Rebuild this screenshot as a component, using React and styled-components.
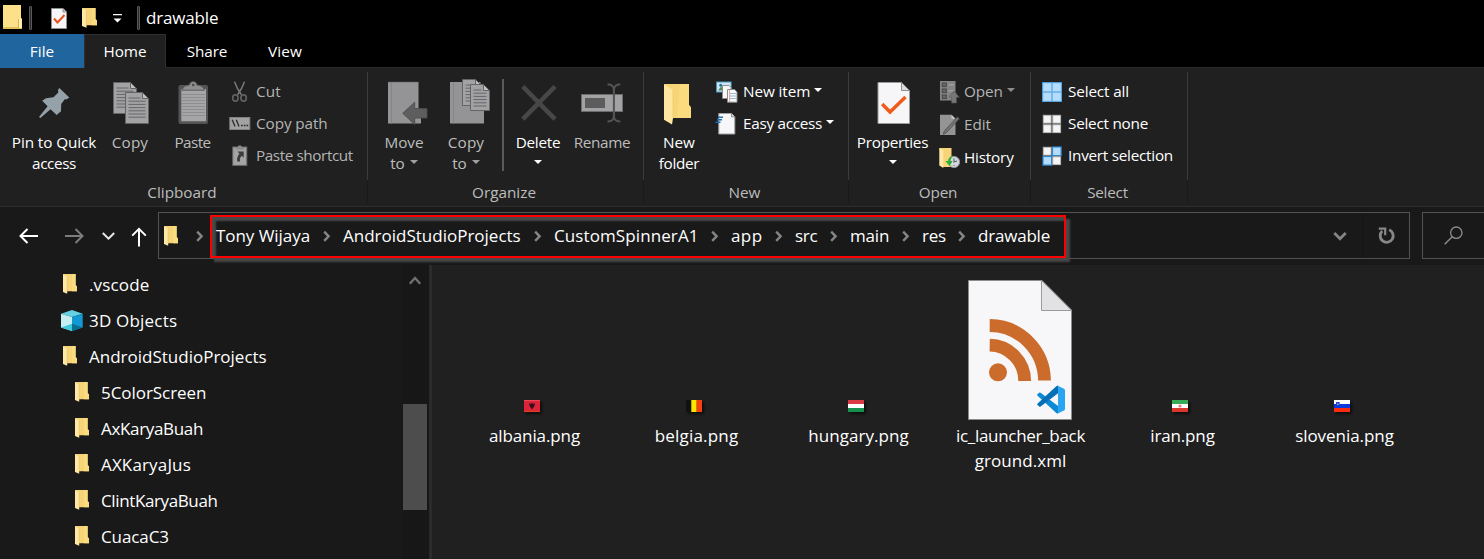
import React from "react";
import styled, { createGlobalStyle, css } from "styled-components";

const GlobalStyle = createGlobalStyle`
  * { box-sizing: border-box; }
  body { margin: 0; background: #191919; }
  svg { display: block; flex: none; overflow: visible; }
`;

const Window = styled.div`
  display: flex;
  flex-direction: column;
  width: 1484px;
  height: 559px;
  overflow: hidden;
  background: #191919;
  color: #fff;
  font-family: "Open Sans", "Noto Sans", sans-serif;
  font-size: 17px;
  white-space: nowrap;
`;

const Text = styled.span`
  letter-spacing: ${(p) => p.$ls || 0}px;
`;

/* ---------- title bar and tabs ---------- */

const TitleBar = styled.header`
  display: flex;
  align-items: center;
  height: 34px;
  padding-left: 3px;
  background: #000;
`;

const TitleDivider = styled.i`
  width: 3px;
  height: 24px;
  margin: 1px ${(p) => p.$right}px 0 ${(p) => p.$left}px;
  border: 1px solid #5a5a5a;
  border-radius: 1px;
  background: #2a2a2a;
`;

const QuickAccess = styled.div`
  display: flex;
  align-items: center;
  gap: 15.5px;
  padding-top: 2px;
`;

const Tabs = styled.nav`
  display: flex;
  height: 34px;
  background: #000;
  border-bottom: 1px solid #2b2b2b;
`;

const Tab = styled.div`
  display: flex;
  justify-content: center;
  height: 34px;
  width: ${(p) => p.$w}px;
  font-size: 15.3px;
  line-height: 34px;
  ${(p) => p.$kind === "file" && css`background: #20659e;`}
  ${(p) =>
    p.$kind === "active" &&
    css`
      background: #202020;
      border: 1px solid #303030;
      border-bottom: 0;
      line-height: 32px;
    `}
`;

/* ---------- ribbon ---------- */

const Ribbon = styled.section`
  display: flex;
  height: 139px;
  background: #202020;
  border-bottom: 1px solid #2e2e2e;
  font-size: 15.3px;
`;

const GroupBox = styled.div`
  display: flex;
  flex-direction: column;
  width: ${(p) => p.$w}px;
  padding-top: 4px;
`;

const GroupTools = styled.div`
  display: flex;
  height: 108px;
  padding-left: ${(p) => p.$pad}px;
  border-right: 1px solid #3c3c3c;
`;

const GroupLabel = styled.div`
  height: 23px;
  padding-right: 3px;
  border-right: 1px solid #191919;
  color: #bdbdbd;
  line-height: 25px;
  text-align: center;
`;

const BigTool = styled.div`
  display: flex;
  flex-direction: column;
  align-items: center;
  width: ${(p) => p.$w}px;
  padding-top: 8px;
  color: ${(p) => (p.$dim ? "#bdbdbd" : "#fff")};
  line-height: 21px;
  svg.big { margin-bottom: 4px; }
`;

const Caption = styled.div`
  display: flex;
  justify-content: center;
  align-items: center;
  gap: 5px;
  height: 21px;
  .caret { margin-bottom: 3px; }
`;

const SmallTools = styled.div`
  display: flex;
  flex-direction: column;
  margin: ${(p) => p.$top}px 0 0 ${(p) => p.$left}px;
`;

const SmallTool = styled.div`
  display: flex;
  align-items: center;
  gap: 5px;
  height: ${(p) => p.$h || 32}px;
  color: ${(p) => (p.$dim ? "#b4b4b4" : "#fff")};
  ${Text} { margin-bottom: 2px; }
  .caret { margin: 0 0 4px -1px; }
`;

const ToolDivider = styled.i`
  width: 2px;
  height: 92px;
  margin: 7px 0 0 10px;
  background: #5a5a5a;
`;

/* ---------- address bar ---------- */

const AddressRow = styled.div`
  display: flex;
  height: 58px;
  padding: 5px 0 0 19px;
  background: #191919;
`;

const NavButtons = styled.div`
  display: flex;
  align-items: center;
  width: 139px;
  height: 47px;
`;

const NavSlot = styled.span`
  margin-right: ${(p) => p.$gap}px;
`;

const AddressBox = styled.div`
  position: relative;
  display: flex;
  align-items: center;
  width: 1252px;
  height: 47px;
  padding-left: 5px;
  border: 1px solid #535353;
`;

const RootChevron = styled.span`
  display: flex;
  justify-content: center;
  width: 38px;
  padding-left: 5px;
`;

const Crumb = styled.span`
  display: flex;
  align-items: center;
  justify-content: space-between;
  width: ${(p) => p.$w}px;
  padding-right: ${(p) => (p.$last ? 0 : 12.5)}px;
`;

const PathOutline = styled.div`
  position: absolute;
  top: 2px;
  left: 51px;
  width: 856px;
  height: 43px;
  border: 2px solid #fe0000;
  box-shadow: inset 4px 4px 2px #484848, 4px 4px 2px #484848;
  z-index: 0;
`;

const Crumbs = styled.div`
  position: relative;
  z-index: 1;
  display: flex;
  flex: 1;
`;

const Refresh = styled.div`
  display: flex;
  align-items: center;
  justify-content: center;
  width: 47px;
  height: 45px;
  margin-left: 15px;
  border-left: 1px solid #151515;
`;

const SearchBox = styled.div`
  display: flex;
  align-items: center;
  flex: 1;
  height: 47px;
  margin-left: 12px;
  padding-left: 21px;
  border: 1px solid #535353;
  border-right: 0;
`;

/* ---------- body ---------- */

const Body = styled.main`
  display: flex;
  flex: 1;
  min-height: 0;
`;

const Tree = styled.aside`
  width: 403px;
  padding-top: 1px;
  overflow: hidden;
`;

const TreeRow = styled.div`
  display: flex;
  align-items: center;
  height: 36px;
  padding-left: ${(p) => (p.$child ? 73 : 61)}px;
`;

const TreeIcon = styled.span`
  width: 28px;
`;

const TreeFolder = styled.span`
  display: block;
  padding-left: 2px;
`;

const Scrollbar = styled.div`
  display: flex;
  flex-direction: column;
  align-items: center;
  width: 26px;
  padding: 11px 2px 0 0;
  background: #171717;
`;

const Thumb = styled.div`
  width: 24px;
  height: 106px;
  margin-top: 119px;
  background: #4d4d4d;
`;

const Files = styled.section`
  display: flex;
  flex: 1;
  padding: 15px 0 0 21px;
  border-left: 3px solid #2b2b2b;
  background: #202020;
`;

const Tile = styled.div`
  flex: none;
  width: 162px;
  display: flex;
  flex-direction: column;
  align-items: center;
  text-align: center;
`;

const Preview = styled.div`
  display: flex;
  flex-direction: column;
  justify-content: flex-end;
  align-items: center;
  height: 140px;
  padding: 0 ${(p) => (p.$flag ? 4 : 0)}px ${(p) => (p.$flag ? 8 : 0)}px 0;
  margin-bottom: 3px;
  svg { ${(p) => p.$flag && css`filter: drop-shadow(2px 2px 1.5px #0009);`} }
`;

const FileName = styled.div`
  padding-left: 1px;
  line-height: 25px;
`;

/* ---------- icons ---------- */

const Caret = ({ c = "#fff" }) => (
  <svg className="caret" width="8" height="4" viewBox="0 0 8 4"><path d="M0 0h8L4 4z" fill={c} /></svg>
);

const FolderIcon = ({ w = 14, h = 20 }) => (
  <svg width={w} height={h} viewBox="0 0 14 20" preserveAspectRatio="none">
    <path d="M0.3 0H12.6V11L14 12.5V17.2H4L1 16z" fill="#f6d477" />
    <path d="M9 0H12.6V11L14 12.5V17.2H9z" fill="#f9dc80" />
    <path d="M0 0L4.2 2.8V19.7L0 18z" fill="#ffe8a4" />
    <path d="M4.2 2.8V17.2" stroke="#e5c064" strokeWidth="0.6" />
  </svg>
);

const WindowFolder = () => (
  <svg width="19" height="24" viewBox="0 0 19 24">
    <path d="M0 0H18V13L19 14V24H0z" fill="#fce08a" />
    <path d="M0 23H19M15.7 23V14" stroke="#d9b449" strokeWidth="1.4" fill="none" />
    <path d="M16 13.5h2.6V23H16z" fill="#fff0b8" />
  </svg>
);

const CheckPage = () => (
  <svg className="big" width="48" height="48" viewBox="0 0 48 48">
    <path d="M9 2.5H32.5L40.5 10.5V43.5H9z" fill="#f6f6f8" stroke="#9a9a9a" />
    <path d="M32.5 2.5V10.5H40.5z" fill="#dcdcdc" stroke="#8c8c8c" />
    <path d="M13.2 24L21 32L36.5 17" fill="none" stroke="#f15a18" strokeWidth="3.4" />
  </svg>
);

const QuickCheck = () => (
  <svg width="16" height="21" viewBox="0 0 16 21">
    <path d="M.5 .5H12L15.5 4V20.5H.5z" fill="#f6f6f8" stroke="#8e8e8e" />
    <path d="M12 .5V4H15.5" fill="#ccc" stroke="#8e8e8e" />
    <path d="M3 10.5L6.5 14.5L13.5 7" fill="none" stroke="#e8511a" strokeWidth="2" />
  </svg>
);

const Customize = () => (
  <svg width="9" height="9" viewBox="0 0 9 9"><path d="M0 0H9V1.2H0zM.5 4.5H8.5L4.5 8.5z" fill="#fff" /></svg>
);

const Pin = () => (
  <svg className="big" width="48" height="48" viewBox="0 0 48 48">
    <path d="M29.3 8L39.3 17.5L36.4 19.5L35 19L31.2 24L31 31.3L26.7 35L20.5 29.2L10.4 38L9 37L17.6 26.3L12.2 20.8L16 18.2L23.5 17.3L28.3 12.5L28 10z" fill="#95a1a9" />
  </svg>
);

const PageShape = ({ x, y, w, h }) => (
  <g transform={`translate(${x} ${y})`}>
    <path d={`M0 0H${w - 6}L${w} 6V${h}H0z`} fill="#a2a2a4" stroke="#646464" />
    <path d={`M${w - 6} 0V6H${w}z`} fill="#c0c0c0" stroke="#646464" />
    {Array.from({ length: Math.floor((h - 6) / 3.2) }, (_, i) => (
      <path key={i} d={`M3 ${5.5 + i * 3.2}H${i === 0 ? w - 8 : w - 3}`} stroke="#66666a" />
    ))}
  </g>
);

const CopyIcon = () => (
  <svg className="big" width="48" height="48" viewBox="0 0 48 48">
    <PageShape x={7.5} y={2.5} w={23} h={31} />
    <PageShape x={19.5} y={12.5} w={23} h={31} />
  </svg>
);

const PasteIcon = () => (
  <svg className="big" width="48" height="48" viewBox="0 0 48 48">
    <rect x="9.5" y="5" width="29.5" height="39" rx="2" fill="#545454" />
    <path d="M12.3 9H37V41.3H12.3z" fill="#a5a5a7" />
    {[14.5, 17.5, 20.5, 23.5, 26.5, 29.5, 32.5, 35.5].map((y) => (
      <path key={y} d={`M13 ${y}H36`} stroke="#8b8b8e" strokeWidth=".9" />
    ))}
    <path d="M13 10.2C14 6.5 17 5.5 20.6 5C20.8 2.6 22.2 1.7 24.2 1.7C26.2 1.7 27.6 2.6 27.8 5C31.5 5.5 34.5 6.5 35.5 10.2z" fill="#8e8e90" stroke="#5c5c5c" />
    <circle cx="24.2" cy="5" r="1.3" fill="#4a4a4a" />
  </svg>
);

const MoveIcon = () => (
  <svg className="big" width="48" height="48" viewBox="0 0 48 48">
    <path d="M8 2H38.5V28L41 31V43.5H8z" fill="#949496" />
    <path d="M11.5 2V43.5" stroke="#858587" />
    <path d="M8.3 2.3H38.2" stroke="#7c7c7c" strokeWidth=".8" />
    <path d="M22.8 33.3L34.7 22.2V28.6H47V38H34.7V44.6z" fill="#5e5e5e" stroke="#4c4c4c" strokeWidth=".9" />
  </svg>
);

const CopyToIcon = () => (
  <svg className="big" width="48" height="48" viewBox="0 0 48 48">
    <path d="M8 2H38.5V28L42 31V43.5H8z" fill="#949496" />
    <path d="M11.5 2V43.5" stroke="#858587" />
    <PageShape x={20.5} y={-0.5} w={19} h={26} />
    <PageShape x={28.5} y={4.5} w={19} h={26} />
  </svg>
);

const DeleteIcon = () => (
  <svg className="big" width="48" height="48" viewBox="0 0 48 48">
    <path d="M8.8 6.5L41 39.2M41 6.5L8.8 39.2" stroke="#474747" strokeWidth="4.6" />
  </svg>
);

const RenameIcon = () => (
  <svg className="big" width="48" height="48" viewBox="0 0 48 48">
    <rect x="3.5" y="14.5" width="41" height="17" fill="#a2a2a4" stroke="#6c6c6c" />
    <rect x="7" y="18" width="20" height="10" fill="#5c5c5c" />
    <path d="M29.5 4.5C33.5 4.3 35.8 6.2 35.8 9.5V36.5C35.8 39.8 33.5 41.7 29.5 41.5M42.3 4.5C38.3 4.3 36 6.2 36 9.5V36.5C36 39.8 38.3 41.7 42.3 41.5" fill="none" stroke="#555" strokeWidth="1.9" />
  </svg>
);

const NewFolderIcon = () => (
  <svg className="big" width="48" height="48" viewBox="0 0 48 48">
    <path d="M9.2 4H34V25L36 27.4V38H15z" fill="#f7d474" />
    <path d="M25 4H34V25L36 27.4V38H22z" fill="#fadb7e" />
    <path d="M9 4L18 10.3V38L17 44.5L9 39.7z" fill="#ffe6a0" />
    <path d="M18 10.3V38" stroke="#eccb72" strokeWidth=".8" />
  </svg>
);

const Cut = () => (
  <svg width="22" height="22" viewBox="0 0 22 22">
    <path d="M5.5 .8C7 5 9.3 9.5 12.4 13.8M15.5 .8C14 5 11.7 9.5 8.6 13.8" stroke="#7a7a7a" strokeWidth="1.5" fill="none" />
    <ellipse cx="6.4" cy="17" rx="2.7" ry="3.2" fill="none" stroke="#606060" strokeWidth="1.7" />
    <ellipse cx="14.6" cy="17" rx="2.7" ry="3.2" fill="none" stroke="#606060" strokeWidth="1.7" />
  </svg>
);

const CopyPath = () => (
  <svg width="22" height="22" viewBox="0 0 22 22">
    <rect x=".8" y="4.5" width="20" height="12" fill="#a2a2a2" stroke="#828282" />
    <path d="M3.2 6.7L6 13.5M7.3 6.7L10 13.5" stroke="#2e2e2e" strokeWidth="1.4" />
    <path d="M12 12.5h1.7M14.8 12.5h1.7M17.5 12.5h1.7" stroke="#2e2e2e" strokeWidth="1.7" />
  </svg>
);

const PasteShortcut = () => (
  <svg width="22" height="22" viewBox="0 0 22 22">
    <rect x="3.8" y="2" width="14" height="18.4" fill="#a4a4a4" stroke="#6a6a6a" />
    <path d="M6.5 4.5V2H8.8L9.6 .6H12L12.8 2H15.2V4.5z" fill="#8a8a8a" />
    <path d="M8.5 6.5H14.7V12.7L12.8 10.8C11 12.5 10.8 14 11 16.5H8.2C7.8 13 8.6 10.8 10.5 8.7z" fill="#3c3c3c" />
  </svg>
);

const NewItem = () => (
  <svg width="22" height="22" viewBox="0 0 22 22">
    <rect x=".6" y="1" width="14.5" height="10" fill="#cfe8f7" stroke="#4a9ac4" />
    <path d="M2 9.5L5 5.5L8 9.5z" fill="#5a8a50" /><circle cx="4.7" cy="4.3" r="1.5" fill="#1f6f9a" />
    <path d="M6.5 4.5H13L15 6.5V17.5H6.5z" fill="#f8f8f8" stroke="#8c8c8c" />
    <path d="M11.5 8.5H18.5L21 11V21.2H11.5z" fill="#fafafa" stroke="#8c8c8c" />
    <path d="M13.5 12.5H20M13.5 15H20M13.5 17.5H20" stroke="#86a8c8" strokeWidth=".8" />
    <path d="M13.6 9V21" stroke="#e09090" strokeWidth=".8" />
  </svg>
);

const EasyAccess = () => (
  <svg width="22" height="22" viewBox="0 0 22 22">
    <path d="M2.8 .5H15.5L18.8 3.8V21H2.8z" fill="#f7f7f9" stroke="#a0a0a0" />
    <path d="M15.5 .5V3.8H18.8" fill="#ddd" stroke="#8c8c8c" />
    <path d="M2 4.3H7M1 6.8H6M-.5 9.3H4.5" stroke="#1c6cb0" strokeWidth="1.4" />
  </svg>
);

const OpenIcon = () => (
  <svg width="22" height="22" viewBox="0 0 22 22">
    <rect x="3" y="0" width="15.5" height="19.5" fill="#858585" />
    {[2, 8, 14].map((y) => (
      <g key={y}>
        <rect x="5.3" y={y} width="4" height="3.6" fill="#666" stroke="#484848" />
        <path d={`M11.5 ${y + 1.8}H17`} stroke="#a0a0a0" strokeWidth="1.4" />
      </g>
    ))}
    <path d="M17 10L22.3 16.2H19.4V22H14.6V16.2H11.7z" fill="#777" stroke="#565656" strokeWidth=".6" />
  </svg>
);

const EditIcon = () => (
  <svg width="22" height="22" viewBox="0 0 22 22">
    <path d="M3 .7H14.5L18.5 4.7V21H3z" fill="#949494" />
    <path d="M14.5 .7V4.7H18.5z" fill="#c4c4c4" />
    <path d="M20.3 3L22.3 4.8L9.5 18.5L6.3 20.3L7.4 16.8z" fill="#747474" stroke="#4f4f4f" strokeWidth=".8" />
  </svg>
);

const HistoryIcon = () => (
  <svg width="22" height="22" viewBox="0 0 22 22">
    <path d="M2.3 1H14.5V20H6z" fill="#f6d477" />
    <path d="M2.3 1L6.3 3.5V21L2.3 18.5z" fill="#ffe8a4" />
    <circle cx="17" cy="15" r="5.6" fill="#d4d8da" stroke="#8e9498" />
    <path d="M17 11.5V15L20 14M14 15H15M17 18V19" stroke="#5c6468" strokeWidth="1.1" fill="none" />
    <path d="M16.5 8.5C12.8 9.2 11.2 11.5 11.2 14H8.3L12.6 19L15.5 14H13.5C13.6 12 14.5 10.5 16.5 8.5z" fill="#2fae3c" />
  </svg>
);

const Squares = ({ kinds, joined }) => (
  <svg width="22" height="22" viewBox="0 0 22 22">
    {joined && <rect x="1" y="1" width="20" height="20" fill="#3c92d6" />}
    {kinds.split("").map((k, i) => {
      const x = i % 2 ? 11.5 : 2;
      const y = i > 1 ? 11.5 : 2;
      return k === "b" ? (
        <rect key={i} x={x} y={y} width="8.6" height="8.6" fill="#b5dcfb" stroke={joined ? "#74b8ec" : "#2f88d0"} strokeWidth={joined ? 0.6 : 1.2} />
      ) : (
        <rect key={i} x={x + 0.3} y={y + 0.3} width="7.8" height="7.8" fill="#f5f5f5" stroke="#b8b8b8" />
      );
    })}
  </svg>
);

const ArrowLeft = () => (
  <svg width="20" height="16" viewBox="0 0 20 16"><path d="M19 8H1.5M8.5 1L1.5 8L8.5 15" fill="none" stroke="#fff" strokeWidth="2" /></svg>
);
const ArrowRight = () => (
  <svg width="20" height="16" viewBox="0 0 20 16"><path d="M0 8H17.5M10.5 1L17.5 8L10.5 15" fill="none" stroke="#7d7d7d" strokeWidth="2" /></svg>
);
const ArrowUp = () => (
  <svg width="15" height="20" viewBox="0 0 15 20"><path d="M7 20.5V3M.2 9.6L7 2.8L13.8 9.6" fill="none" stroke="#fff" strokeWidth="2" /></svg>
);
const ChevDown = ({ c, w = 2, s = 13 }) => (
  <svg width={s} height="8" viewBox="0 0 13 8"><path d="M.8 1L6.5 6.7L12.2 1" fill="none" stroke={c} strokeWidth={w} /></svg>
);
const ChevUp = () => (
  <svg width="12" height="9" viewBox="0 0 12 9"><path d="M.8 7.8L6 2L11.2 7.8" fill="none" stroke="#707070" strokeWidth="2.4" /></svg>
);
const ChevRight = () => (
  <svg width="8" height="12" viewBox="0 0 8 12"><path d="M1.2 1.7L5.6 6.3L1.2 10.9" fill="none" stroke="#858585" strokeWidth="2.4" /></svg>
);
const RefreshIcon = () => (
  <svg width="17" height="17" viewBox="0 0 17 17">
    <path d="M11.2 2.8A6.5 6.5 0 1 1 4.2 4.1" fill="none" stroke="#888" strokeWidth="2.8" />
    <path d="M.8 1.7H7.2V8.2" fill="none" stroke="#888" strokeWidth="2.2" />
  </svg>
);
const SearchIcon = () => (
  <svg width="19" height="19" viewBox="0 0 19 19">
    <circle cx="12.3" cy="6.7" r="5.7" fill="none" stroke="#8c8c8c" strokeWidth="1.3" />
    <path d="M8.2 10.8L.7 18.3" stroke="#8c8c8c" strokeWidth="1.4" />
  </svg>
);

const Cube = () => (
  <svg width="22" height="21" viewBox="0 0 22 21">
    <path d="M11 0L21.7 3.8L11 7L0 3.8z" fill="#65d2e4" />
    <path d="M0 3.8L11 7V21L0 17.5z" fill="#c4f0f2" />
    <path d="M21.7 3.8L11 7V21L21.7 17.5z" fill="#1298d4" />
    <path d="M0 17.5L11 13.8V21z" fill="#3ecbdc" />
    <path d="M21.7 17.5L11 13.8V21z" fill="#0b6f92" />
  </svg>
);

const XmlFile = () => (
  <svg width="104" height="140" viewBox="0 0 104 140">
    <path d="M.5 .5H74L103.5 30V139.5H.5z" fill="#f7f7f9" stroke="#8c8c8c" />
    <path d="M73.5 .5L103.5 30.5H73.5z" fill="#e2e2e4" stroke="#9a9a9a" />
    <circle cx="30" cy="92.3" r="9" fill="#cb6c2c" />
    <path d="M21.7 65.2A35.5 35.8 0 0 1 56.7 101" fill="none" stroke="#cb6c2c" strokeWidth="12.8" />
    <path d="M21.7 45.5A55 55.5 0 0 1 76.5 100.5" fill="none" stroke="#cb6c2c" strokeWidth="12.8" />
    <g transform="translate(69.2 105.7) scale(.278)">
      <path d="M1.4 36.4A4.2 4.2 0 0 1 1.4 30.3L6.9 25.2A4.2 4.2 0 0 1 12.2 25L75 72.7V99.5Q71 100 68.7 97.9z" fill="#0c8ad6" />
      <path d="M1.4 63.6A4.2 4.2 0 0 0 1.4 69.7L6.9 74.8A4.2 4.2 0 0 0 12.2 75L75 27.3V.5Q71 0 68.7 2.1z" fill="#0670b6" />
      <path d="M75.9 99.1Q71 100.6 68.7 97.9C71 100 75 98.5 75 95.2V4.8C75 1.5 71 0 68.7 2.1Q71 -.6 75.9 .9L96.5 10.8Q100 12.5 100 16.4V83.6Q100 87.5 96.5 89.2z" fill="#27a5f0" />
    </g>
  </svg>
);

const flagArt = {
  albania: (
    <>
      <rect width="16" height="12" fill="#dc2338" /><rect width="16" height="1" fill="#e8485a" /><rect y="11" width="16" height="1" fill="#e04020" />
      <path d="M5 3L7 4L8 2.5L9 4L11 3L10.3 6.3L8 9.5L5.7 6.3z" fill="#35101c" />
    </>
  ),
  belgia: (
    <><rect width="5.3" height="12" fill="#111" /><rect x="5.3" width="5.4" height="12" fill="#ffe600" /><rect x="10.7" width="5.3" height="12" fill="#fb4010" /></>
  ),
  hungary: (
    <><rect width="16" height="4" fill="#d93a45" /><rect y="4" width="16" height="4" fill="#fff" /><rect y="8" width="16" height="4" fill="#14904f" /></>
  ),
  iran: (
    <><rect width="16" height="4" fill="#37ab57" /><rect y="4" width="16" height="4" fill="#fff" /><rect y="8" width="16" height="4" fill="#d8382c" /><circle cx="8" cy="6" r="1.6" fill="#e58080" /></>
  ),
  slovenia: (
    <><rect width="16" height="4" fill="#fff" /><rect y="4" width="16" height="4" fill="#0c38e0" /><rect y="8" width="16" height="4" fill="#fb2a10" /><path d="M2 2H5.7V5Q4 7 2 5z" fill="#2448c8" /><path d="M3 4.5L3.9 3.3L4.8 4.5z" fill="#fff" /></>
  ),
};

const Flag = ({ name }) => <svg width="16" height="12" viewBox="0 0 16 12">{flagArt[name]}</svg>;

/* ---------- composition ---------- */

const Group = ({ label, ls, w, pad, children }) => (
  <GroupBox $w={w}>
    <GroupTools $pad={pad}>{children}</GroupTools>
    <GroupLabel><Text $ls={ls}>{label}</Text></GroupLabel>
  </GroupBox>
);

const crumbs = [
  ["Tony Wijaya", 127, -0.05],
  ["AndroidStudioProjects", 211, 0],
  ["CustomSpinnerA1", 177, 0.1],
  ["app", 64, 0.4],
  ["src", 55, -0.3],
  ["main", 72, -0.2],
  ["res", 56, -0.3],
  ["drawable", 80, -0.2],
];

const tree = [
  [".vscode", 0, 0.15, "folder"],
  ["3D Objects", 0, 0.2, "cube"],
  ["AndroidStudioProjects", 0, 0, "folder"],
  ["5ColorScreen", 1, -0.05, "folder"],
  ["AxKaryaBuah", 1, -0.33, "folder"],
  ["AXKaryaJus", 1, 0.15, "folder"],
  ["ClintKaryaBuah", 1, -0.38, "folder"],
  ["CuacaC3", 1, -0.1, "folder"],
];

const files = [
  [["albania.png"], -0.1, "albania"],
  [["belgia.png"], 0.2, "belgia"],
  [["hungary.png"], 0.05, "hungary"],
  [["ic_launcher_back", "ground.xml"], -0.3, null],
  [["iran.png"], -0.15, "iran"],
  [["slovenia.png"], -0.05, "slovenia"],
];

export default function App() {
  return (
    <Window>
      <GlobalStyle />
      <TitleBar>
        <WindowFolder />
        <TitleDivider $left={7} $right={18.5} />
        <QuickAccess>
          <QuickCheck />
          <FolderIcon w={15} h={20} />
          <Customize />
        </QuickAccess>
        <TitleDivider $left={15.5} $right={6} />
        <Text $ls={-0.16}>drawable</Text>
      </TitleBar>

      <Tabs>
        <Tab $w={84} $kind="file"><Text $ls={0.1}>File</Text></Tab>
        <Tab $w={82} $kind="active"><Text>Home</Text></Tab>
        <Tab $w={82}><Text $ls={-0.1}>Share</Text></Tab>
        <Tab $w={74}><Text $ls={0.2}>View</Text></Tab>
      </Tabs>

      <Ribbon>
        <Group label="Clipboard" w={368} pad={6}>
          <BigTool $w={96}>
            <Pin />
            <Caption><Text $ls={-0.1}>Pin to Quick</Text></Caption>
            <Caption><Text $ls={-0.4}>access</Text></Caption>
          </BigTool>
          <BigTool $w={56} $dim><CopyIcon /><Caption><Text $ls={0.1}>Copy</Text></Caption></BigTool>
          <BigTool $w={69} $dim><PasteIcon /><Caption><Text $ls={-0.6}>Paste</Text></Caption></BigTool>
          <SmallTools $left={2} $top={4}>
            <SmallTool $dim><Cut /><Text $ls={0.1}>Cut</Text></SmallTool>
            <SmallTool $dim><CopyPath /><Text $ls={-0.1}>Copy path</Text></SmallTool>
            <SmallTool $dim><PasteShortcut /><Text $ls={-0.42}>Paste shortcut</Text></SmallTool>
          </SmallTools>
        </Group>

        <Group label="Organize" w={276} pad={0}>
          <BigTool $w={72} $dim>
            <MoveIcon />
            <Caption><Text>Move</Text></Caption>
            <Caption><Text>to</Text><Caret c="#a0a0a0" /></Caption>
          </BigTool>
          <BigTool $w={52} $dim>
            <CopyToIcon />
            <Caption><Text $ls={0.1}>Copy</Text></Caption>
            <Caption><Text>to</Text><Caret c="#a0a0a0" /></Caption>
          </BigTool>
          <ToolDivider />
          <BigTool $w={68}>
            <DeleteIcon />
            <Caption><Text $ls={-0.25}>Delete</Text></Caption>
            <Caption><Caret /></Caption>
          </BigTool>
          <BigTool $w={60} $dim><RenameIcon /><Caption><Text $ls={-0.32}>Rename</Text></Caption></BigTool>
        </Group>

        <Group label="New" w={205} pad={0}>
          <BigTool $w={70}>
            <NewFolderIcon />
            <Caption><Text>New</Text></Caption>
            <Caption><Text $ls={-0.3}>folder</Text></Caption>
          </BigTool>
          <SmallTools $left={2} $top={4}>
            <SmallTool><NewItem /><Text $ls={-0.1}>New item</Text><Caret /></SmallTool>
            <SmallTool><EasyAccess /><Text $ls={-0.3}>Easy access</Text><Caret /></SmallTool>
          </SmallTools>
        </Group>

        <Group label="Open" ls={-0.2} w={182} pad={0}>
          <BigTool $w={87}>
            <CheckPage />
            <Caption><Text $ls={-0.26}>Properties</Text></Caption>
            <Caption><Caret /></Caption>
          </BigTool>
          <SmallTools $left={1} $top={3}>
            <SmallTool $h={33} $dim><OpenIcon /><Text $ls={-0.1}>Open</Text><Caret c="#8c8c8c" /></SmallTool>
            <SmallTool $h={33} $dim><EditIcon /><Text $ls={-0.1}>Edit</Text></SmallTool>
            <SmallTool $h={33}><HistoryIcon /><Text $ls={-0.2}>History</Text></SmallTool>
          </SmallTools>
        </Group>

        <Group label="Select" ls={-0.25} w={157} pad={10}>
          <SmallTools $left={0} $top={4}>
            <SmallTool><Squares kinds="bbbb" joined /><Text $ls={-0.15}>Select all</Text></SmallTool>
            <SmallTool><Squares kinds="wwww" /><Text $ls={-0.25}>Select none</Text></SmallTool>
            <SmallTool><Squares kinds="wbbw" /><Text $ls={-0.26}>Invert selection</Text></SmallTool>
          </SmallTools>
        </Group>
      </Ribbon>

      <AddressRow>
        <NavButtons>
          <NavSlot $gap={26}><ArrowLeft /></NavSlot>
          <NavSlot $gap={17}><ArrowRight /></NavSlot>
          <NavSlot $gap={17}><ChevDown c="#e8e8e8" /></NavSlot>
          <NavSlot $gap={0}><ArrowUp /></NavSlot>
        </NavButtons>
        <AddressBox>
          <PathOutline />
          <FolderIcon />
          <RootChevron><ChevRight /></RootChevron>
          <Crumbs>
            {crumbs.map(([name, w, ls], i) => (
              <Crumb key={name} $w={w} $last={i === crumbs.length - 1}>
                <Text $ls={ls}>{name}</Text>
                {i < crumbs.length - 1 && <ChevRight />}
              </Crumb>
            ))}
          </Crumbs>
          <ChevDown c="#858585" w={2.8} s={14} />
          <Refresh><RefreshIcon /></Refresh>
        </AddressBox>
        <SearchBox><SearchIcon /></SearchBox>
      </AddressRow>

      <Body>
        <Tree>
          {tree.map(([name, child, ls, kind]) => (
            <TreeRow key={name} $child={child}>
              <TreeIcon>{kind === "cube" ? <Cube /> : <TreeFolder><FolderIcon /></TreeFolder>}</TreeIcon>
              <Text $ls={ls}>{name}</Text>
            </TreeRow>
          ))}
        </Tree>
        <Scrollbar><ChevUp /><Thumb /></Scrollbar>
        <Files>
          {files.map(([lines, ls, flag]) => (
            <Tile key={lines[0]}>
              <Preview $flag={flag}>{flag ? <Flag name={flag} /> : <XmlFile />}</Preview>
              {lines.map((l) => <FileName key={l}><Text $ls={l === "ground.xml" ? 0.05 : ls}>{l}</Text></FileName>)}
            </Tile>
          ))}
        </Files>
      </Body>
    </Window>
  );
}
